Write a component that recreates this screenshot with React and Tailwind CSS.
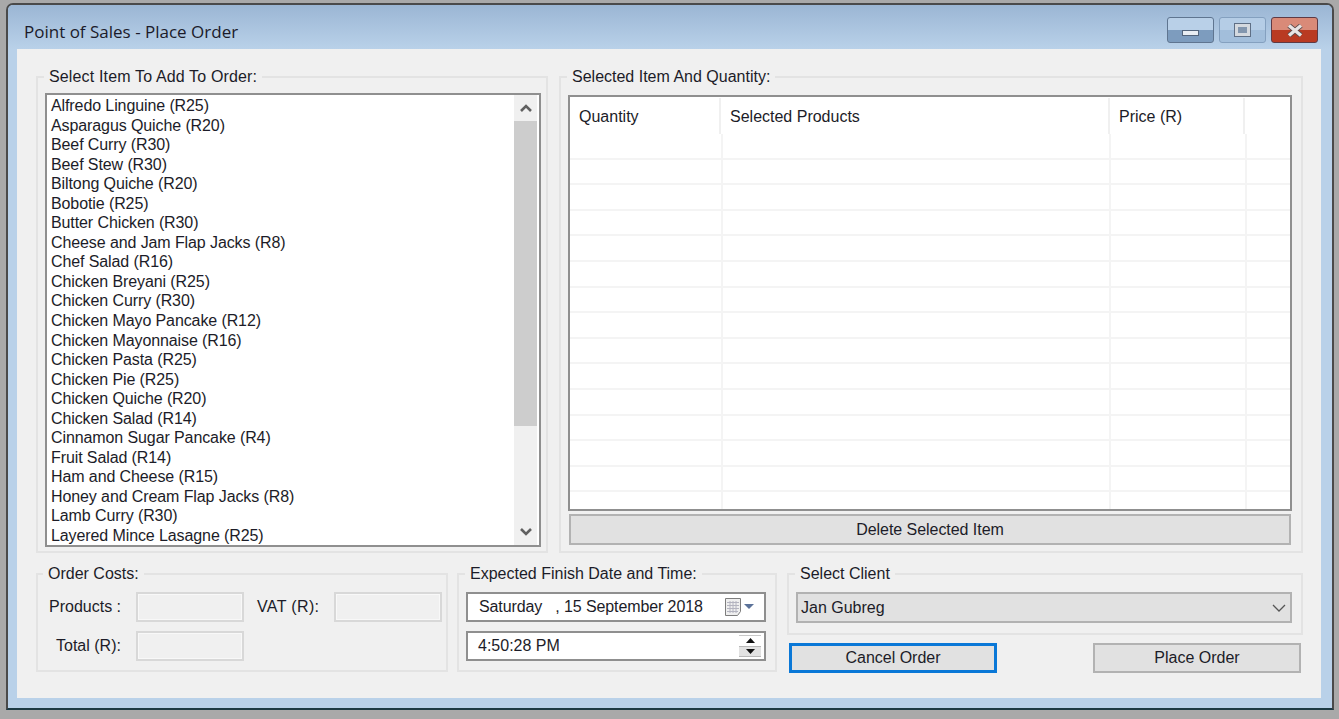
import React from "react";

const ITEMS = [
  "Alfredo Linguine (R25)",
  "Asparagus Quiche (R20)",
  "Beef Curry (R30)",
  "Beef Stew (R30)",
  "Biltong Quiche (R20)",
  "Bobotie (R25)",
  "Butter Chicken (R30)",
  "Cheese and Jam Flap Jacks (R8)",
  "Chef Salad (R16)",
  "Chicken Breyani (R25)",
  "Chicken Curry (R30)",
  "Chicken Mayo Pancake (R12)",
  "Chicken Mayonnaise (R16)",
  "Chicken Pasta (R25)",
  "Chicken Pie (R25)",
  "Chicken Quiche (R20)",
  "Chicken Salad (R14)",
  "Cinnamon Sugar Pancake (R4)",
  "Fruit Salad (R14)",
  "Ham and Cheese (R15)",
  "Honey and Cream Flap Jacks (R8)",
  "Lamb Curry (R30)",
  "Layered Mince Lasagne (R25)",
];

const ROWS = Array.from({ length: 15 }, (_, i) => i);

const Group = ({ label, className, children }) => (
  <fieldset className={`border-2 border-[#e3e3e3] min-w-0 ${className}`}>
    <legend className="ml-[6px] px-[5px] h-[20px] leading-[20px] whitespace-nowrap">{label}</legend>
    {children}
  </fieldset>
);

const DisabledInput = () => (
  <div className="w-[108px] h-[30px] border-2 border-[#d8d8d8] bg-[#f0f0f0] shadow-[inset_0_0_0_1px_#f8f8f8]" />
);

const Chevron = ({ up }) => (
  <svg width="14" height="10" viewBox="0 0 14 10">
    <path
      d={up ? "M2 8 L7 3 L12 8" : "M2 2 L7 7 L12 2"}
      fill="none"
      stroke="#606060"
      strokeWidth="2.6"
    />
  </svg>
);

const CalendarIcon = () => (
  <svg width="30" height="20" viewBox="0 0 30 20">
    <path d="M0.5 1.5h15v13l-3 4h-12z" fill="#efefef" stroke="#7d7d7d" />
    <path d="M2 5.5h12M2 8.5h12M2 11.5h12M2 14.5h11M5 4v12M8 4v12M11 4v12" stroke="#b4b4c0" strokeWidth="1" />
    <path d="M19 7h10l-5 5z" fill="#5b7299" />
  </svg>
);

const Spinner = () => (
  <div className="w-[22px] h-[22px] flex flex-col">
    <div className="flex-1 bg-white border-t border-[#c8c8c8] flex items-center justify-center">
      <svg width="9" height="5" viewBox="0 0 9 5"><path d="M4.5 0l4.5 5H0z" fill="#111" /></svg>
    </div>
    <div className="flex-1 bg-[#e2e2e2] border-t border-b border-[#b8b8b8] flex items-center justify-center">
      <svg width="9" height="5" viewBox="0 0 9 5"><path d="M0 0h9L4.5 5z" fill="#111" /></svg>
    </div>
  </div>
);

const CaptionButton = ({ className, children }) => (
  <div className={`w-[47px] h-[26px] rounded-[3px] border flex items-center justify-center ${className}`}>
    {children}
  </div>
);

const App = () => {
  return (
    <div
      className="w-[1339px] h-[719px] overflow-hidden bg-[#a9a9a9] pt-[3px] pl-[6px] text-[16px] text-[#1c1c28]"
      style={{ fontFamily: '"Liberation Sans", Arial, sans-serif' }}
    >
      {/* window frame */}
      <div className="w-[1328px] h-[707px] rounded-t-[7px] border-2 border-[#4a4a4a] border-b-[#1d3a44] bg-[#b9d1e9] flex flex-col">
        <div className="h-[44px] shrink-0 rounded-t-[5px] bg-gradient-to-b from-[#9bb6d4] to-[#b9d1e9] flex items-start pl-[16px] pr-[14px]">
          <div
            className="mt-[16px] text-[17px] leading-[22px] text-[#1b1b2a]"
            style={{ fontFamily: '"Open Sans", sans-serif' }}
          >
            Point of Sales - Place Order
          </div>
          <div className="ml-auto mt-[12px] flex gap-[5px]">
            <CaptionButton className="border-[#5f7590] bg-gradient-to-b from-[#b9d0e8] from-50% to-[#7d9cbe] to-50%">
              <div className="w-[17px] h-[6px] bg-[#e9eef3] border border-[#53657c] mt-[6px]" />
            </CaptionButton>
            <CaptionButton className="border-[#84a0bf] bg-gradient-to-b from-[#b5cde6] from-50% to-[#a2bedb] to-50%">
              <div className="w-[15px] h-[12px] bg-[#8296ae] border-[3px] border-[#d4d9df] outline outline-1 outline-[#5f6f85]" />
            </CaptionButton>
            <CaptionButton className="border-[#5f3a44] bg-gradient-to-b from-[#d98a78] from-50% to-[#b93a22] to-50%">
              <svg width="18" height="13" viewBox="0 0 18 13">
                <path d="M3 1.5 L15 11.5 M15 1.5 L3 11.5" stroke="#5a4a4a" strokeWidth="5" />
                <path d="M3 1.5 L15 11.5 M15 1.5 L3 11.5" stroke="#e8e4e4" strokeWidth="3.4" />
              </svg>
            </CaptionButton>
          </div>
        </div>

        {/* client area */}
        <div className="ml-[9px] w-[1304px] h-[649px] bg-[#f0f0f0] pt-[18px] pl-[19px]">
          <div className="flex gap-[11px]">
            <Group label={<span className="tracking-[0.15px]">Select Item To Add To Order:</span>} className="w-[512px] h-[486px]">
              <div className="mt-[6px] ml-[7px] w-[496px] h-[454px] border-2 border-[#8f8f8f] bg-white flex overflow-hidden">
                <ul className="flex-1 min-w-0 pl-[4px] pt-[1px] tracking-[-0.1px]">
                  {ITEMS.map((item) => (
                    <li key={item} className="h-[19.55px] leading-[19.55px] whitespace-nowrap">
                      {item}
                    </li>
                  ))}
                </ul>
                <div className="w-[23px] mr-[2px] bg-[#f0f0f0] flex flex-col items-center">
                  <div className="h-[26px] flex items-center justify-center">
                    <Chevron up />
                  </div>
                  <div className="w-full h-[305px] bg-[#cdcdcd]" />
                  <div className="mt-auto h-[26px] flex items-center justify-center">
                    <Chevron />
                  </div>
                </div>
              </div>
            </Group>

            <Group label="Selected Item And Quantity:" className="w-[744px] h-[486px]">
              <div className="mt-[8px] ml-[7px] w-[724px] h-[416px] border-2 border-[#8f8f8f] bg-white overflow-hidden">
                <div className="h-[37px] flex pt-[1px]">
                  <div className="w-[151px] border-r-2 border-[#f0f0f0] pl-[9px] pt-[7px]">Quantity</div>
                  <div className="w-[389px] border-r-2 border-[#f0f0f0] pl-[9px] pt-[7px]">Selected Products</div>
                  <div className="w-[135px] border-r-2 border-[#f0f0f0] pl-[9px] pt-[7px]">Price (R)</div>
                </div>
                {ROWS.map((row) => (
                  <div key={row} className="h-[25.6px] flex border-b-2 border-[#f4f4f4]">
                    <div className="w-[153px] border-r-2 border-[#f4f4f4]" />
                    <div className="w-[388px] border-r-2 border-[#f4f4f4]" />
                    <div className="w-[136px] border-r-2 border-[#f4f4f4]" />
                  </div>
                ))}
              </div>
              <button className="mt-[3px] ml-[8px] w-[722px] h-[31px] pt-[1px] bg-[#e1e1e1] border-2 border-[#b2b2b2] tracking-[-0.05px]">
                Delete Selected Item
              </button>
            </Group>
          </div>

          <div className="mt-[11px] flex">
            <Group label="Order Costs:" className="w-[412px] h-[108px] [&>legend]:ml-[5px]">
              <div className="pt-[8px] pl-[11px] flex flex-col gap-[9px]">
                <div className="flex items-center">
                  <span className="w-[72px] whitespace-nowrap">Products :</span>
                  <span className="ml-[15px]"><DisabledInput /></span>
                  <span className="ml-[13px] w-[62px] whitespace-nowrap tracking-[0.35px]">VAT (R):</span>
                  <span className="ml-[15px]"><DisabledInput /></span>
                </div>
                <div className="flex items-center">
                  <span className="w-[72px] pl-[7px] whitespace-nowrap">Total (R):</span>
                  <span className="ml-[15px]"><DisabledInput /></span>
                </div>
              </div>
            </Group>

            <Group label="Expected Finish Date and Time:" className="ml-[9px] w-[320px] h-[108px]">
              <div className="pt-[8px] pl-[7px] flex flex-col gap-[9px]">
                <div className="w-[300px] h-[30px] border-2 border-[#8f8f8f] bg-white flex items-center pl-[11px] pr-[9px]">
                  <span className="whitespace-pre tracking-[-0.1px]">Saturday   , 15 September 2018</span>
                  <span className="ml-auto"><CalendarIcon /></span>
                </div>
                <div className="w-[300px] h-[30px] border-2 border-[#8f8f8f] bg-white flex items-center pl-[10px] pr-[3px]">
                  <span>4:50:28 PM</span>
                  <span className="ml-auto"><Spinner /></span>
                </div>
              </div>
            </Group>

            <div className="ml-[10px] w-[516px]">
              <Group label="Select Client" className="w-[516px] h-[71px]">
                <div className="mt-[8px] ml-[7px] w-[496px] h-[31px] pt-[1px] bg-[#e1e1e1] border-2 border-[#b2b2b2] flex items-center pl-[3px] pr-[3px]">
                  <span>Jan Gubreg</span>
                  <svg className="ml-auto" width="16" height="10" viewBox="0 0 16 10">
                    <path d="M2 2 L8 8 L14 2" fill="none" stroke="#555" strokeWidth="1.3" />
                  </svg>
                </div>
              </Group>
              <div className="mt-[8px] px-[2px] flex justify-between">
                <button className="w-[208px] h-[30px] bg-[#e1e1e1] border-[3px] border-[#0a78d7]">Cancel Order</button>
                <button className="w-[208px] h-[30px] bg-[#e1e1e1] border-2 border-[#b2b2b2]">Place Order</button>
              </div>
            </div>
          </div>
        </div>
      </div>
    </div>
  );
};

export default App;
